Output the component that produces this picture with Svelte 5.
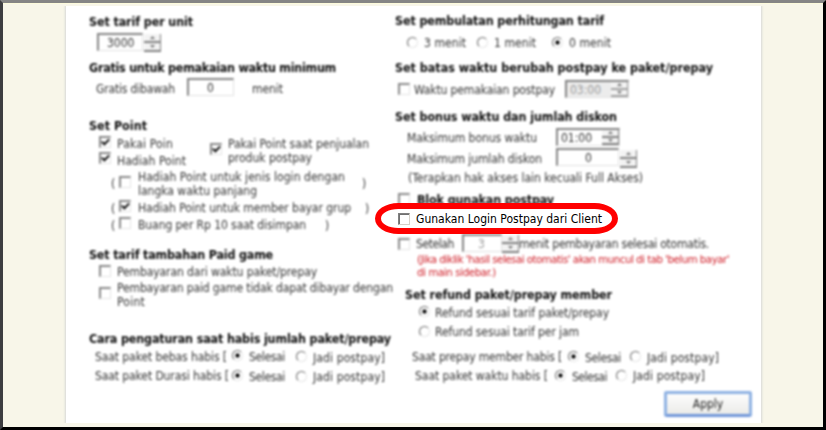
<script>
  // Item kinds: t = text, b = bold heading, r = red note, c = checkbox,
  // o = radio, i = input, s = spinner. x is the left edge, w the width.
  const t = (x, end, text, dy = 0) => ({ k: 't', x, w: end - x, text, dy: dy + 0.5 });
  const b = (x, end, text) => ({ k: 'b', x, w: end - x, text, dy: 0.5 });
  const r = (x, end, text) => ({ k: 'r', x, w: end - x, text, dy: 0.5 });
  const c = (x, on = false, dy = 0) => ({ k: 'c', x, w: 12, on, dy });
  const o = (x, on = false, dy = 0) => ({ k: 'o', x, w: 11, on, dy });
  const i = (x, w, text, pad, extra = {}) => ({ k: 'i', x, w, text, pad, dy: 0, ...extra });
  const s = (x, dy = 0) => ({ k: 's', x, w: 17, dy });

  const left = [
    [21, b(89, 193, 'Set tarif per unit')],
    [42, i(97, 46, '3000', 8), s(144, 1)],
    [67, b(89, 336, 'Gratis untuk pemakaian waktu minimum')],
    [88, t(96, 175, 'Gratis dibawah'), i(187, 47, '0', 18, { dy: -1 }), t(252, 283, 'menit')],
    [125, b(89, 147, 'Set Point')],
    [143, c(99, true, -1), t(117, 173, 'Pakai Poin'), c(210, true, 6), t(228, 369, 'Pakai Point saat penjualan')],
    [158, c(99, true, 0), t(117, 186, 'Hadiah Point', 2), t(228, 312, 'produk postpay', -1)],
    [176, t(111, 115, '(', 7), c(119, false, 6), t(138, 345, 'Hadiah Point untuk jenis login dengan'), t(362, 366, ')', 7)],
    [190, t(138, 257, 'langka waktu panjang')],
    [207, t(111, 115, '(', 1), c(119, true, -1), t(138, 351, 'Hadiah Point untuk member bayar grup'), t(365, 369, ')', 1)],
    [224, t(111, 115, '(', 1), c(119, false, -1), t(138, 306, 'Buang per Rp 10 saat disimpan'), t(325, 329, ')', 1)],
    [254, b(89, 273, 'Set tarif tambahan Paid game')],
    [271, c(99), t(117, 317, 'Pembayaran dari waktu paket/prepay')],
    [287, c(99, false, 6), t(117, 393, 'Pembayaran paid game tidak dapat dibayar dengan')],
    [301, t(117, 145, 'Point')],
    [338, b(89, 391, 'Cara pengaturan saat habis jumlah paket/prepay')],
    [357, t(95, 227, 'Saat paket bebas habis [', -1), o(232, true, -2), t(249, 285, 'Selesai', -0.5), o(296, false, -1), t(313, 385, 'Jadi postpay]')],
    [376, t(95, 229, 'Saat paket Durasi habis [', -1), o(232, true, -1), t(249, 285, 'Selesai'), o(296), t(313, 385, 'Jadi postpay]')]
  ];

  const right = [
    [20, b(395, 604, 'Set pembulatan perhitungan tarif')],
    [42, o(407), t(424, 466, '3 menit'), o(477), t(494, 536, '1 menit'), o(552, true), t(569, 611, '0 menit')],
    [67, b(395, 713, 'Set batas waktu berubah postpay ke paket/prepay')],
    [89, c(398), t(414, 555, 'Waktu pemakaian postpay'), i(565, 64, '03:00', 3, { off: true, spin: true })],
    [116, b(395, 617, 'Set bonus waktu dan jumlah diskon')],
    [137, t(407, 537, 'Maksimum bonus waktu'), i(556, 64, '01:00', 3, { spin: true })],
    [158, t(407, 542, 'Maksimum jumlah diskon'), i(556, 63, '0', 27, { dy: -1 }), s(620, 1)],
    [177, t(408, 643, '(Terapkan hak akses lain kecuali Full Akses)')],
    [199, c(398), b(417, 554, 'Blok gunakan postpay')],
    [243, c(398, false, 1), t(416, 454, 'Setelah'), i(462, 40, '3', 14, { faint: true }), s(502, 1), t(519, 709, 'menit pembayaran selesai otomatis.')],
    [259, r(417, 729, "(Jika diklik 'hasil selesai otomatis' akan muncul di tab 'belum bayar'")],
    [272, r(417, 496, 'di main sidebar.)')],
    [294, b(405, 612, 'Set refund paket/prepay member')],
    [312, o(419, true, -1), t(435, 609, 'Refund sesuai tarif paket/prepay')],
    [331, o(419), t(435, 579, 'Refund sesuai tarif per jam')],
    [357, t(412, 562, 'Saat prepay member habis [', -0.5), o(568, true, -1), t(585, 621, 'Selesai'), o(630, false, -1), t(647, 719, 'Jadi postpay]')],
    [376, t(415, 548, 'Saat paket waktu habis [', -0.5), o(555, true, -1), t(572, 607, 'Selesai'), o(616, false, -1), t(633, 705, 'Jadi postpay]', -0.5)]
  ];

  const ROW = 12;
  const PANEL_TOP = 6;

  // Turns edges and centre lines into the gaps between rows and items.
  function layout(rows, originX) {
    let bottom = PANEL_TOP;
    return rows.map(([cy, ...items]) => {
      const gap = cy - ROW / 2 - bottom;
      bottom = cy + ROW / 2;
      let x = originX;
      return {
        gap,
        items: items.map((it) => {
          const space = it.x - x;
          x = it.x + it.w;
          return { ...it, space };
        })
      };
    });
  }

  const columns = [
    { side: 'left', rows: layout(left, 66) },
    { side: 'right', rows: layout(right, 395) }
  ];

  // Tracks the letters so that a label fills its column width.
  function fit(node, width) {
    const natural = node.getBoundingClientRect().width;
    node.style.letterSpacing = (width - natural) / node.textContent.length + 'px';
  }
</script>

{#snippet tick()}
  <svg class="tick" viewBox="0 0 8 8"><path d="M.7 3.2 3 5.6 7.3 1.2" /></svg>
{/snippet}

{#snippet spinner()}
  <span class="spinner">
    <i><svg viewBox="0 0 5 3"><path d="M0 3 2.5 0 5 3z" /></svg></i>
    <i><svg viewBox="0 0 5 3"><path d="M0 0 2.5 3 5 0z" /></svg></i>
  </span>
{/snippet}

<div class="frame">
  <div class="panel">
    <div class="form">
      {#each columns as col}
        <div class="column {col.side}">
          {#each col.rows as row}
            <div class="row" style="margin-top:{row.gap}px">
              {#each row.items as it}
                <div
                  class="item"
                  style="margin-left:{it.space}px;width:{it.w}px;transform:translateY({it.dy}px)"
                >
                  {#if it.k === 't' || it.k === 'b' || it.k === 'r'}
                    <span class="text {it.k}" use:fit={it.w}>{it.text}</span>
                  {:else if it.k === 'c'}
                    <span class="check">{#if it.on}{@render tick()}{/if}</span>
                  {:else if it.k === 'o'}
                    <span class="radio" class:on={it.on}></span>
                  {:else if it.k === 'i'}
                    <span class="input" class:off={it.off} class:faint={it.faint} style="padding-left:{it.pad}px">
                      <span class="text">{it.text}</span>
                      {#if it.spin}{@render spinner()}{/if}
                    </span>
                  {:else}
                    {@render spinner()}
                  {/if}
                </div>
              {/each}
            </div>
          {/each}
          {#if col.side === 'right'}
            <button class="apply">Apply</button>
          {/if}
        </div>
      {/each}
    </div>
  </div>

  <div class="callout">
    <span class="check sharp"></span>
    <span class="text" use:fit={186}>Gunakan Login Postpay dari Client</span>
  </div>
</div>

<style>
  :global(body) {
    margin: 0;
    overflow: hidden;
  }
  .frame {
    position: relative;
    box-sizing: border-box;
    width: 826px;
    height: 430px;
    border: 3px solid #000;
    border-top-color: #858585;
    border-left-color: #3d3d40;
    background: #f8f6e9;
    padding: 3px 62px 4px 63px;
    font: 12px/14px 'DejaVu Sans Condensed', 'DejaVu Sans', sans-serif;
    font-stretch: condensed;
    color: #000;
    box-shadow: inset 0 1px #fdfbdc;
  }
  .panel {
    height: 417px;
    background: #fff;
    box-shadow: 0 0 2px 1px #d6d8d6;
    clip-path: inset(0 -3px 0 -3px);
  }
  .form {
    display: flex;
    height: 100%;
    filter: blur(0.9px);
    color: #333;
  }
  .column {
    display: flex;
    flex-direction: column;
  }
  .left {
    width: 329px;
  }
  .right {
    width: 366px;
  }
  .row {
    display: flex;
    align-items: center;
    flex: none;
    height: 12px;
  }
  .item {
    display: flex;
    align-items: center;
    flex: none;
  }
  .text {
    flex: none;
    white-space: pre;
  }
  .b {
    font-size: 12.4px;
    font-weight: bold;
    color: #0c0c0c;
  }
  .r {
    font-size: 11.3px;
    color: #cf1c26;
  }
  .check {
    box-sizing: border-box;
    width: 12px;
    height: 12px;
    flex: none;
    display: flex;
    align-items: center;
    justify-content: center;
    border: 1px solid #e4e4e4;
    border-top: 2px solid #8a8a8a;
    border-left: 2px solid #8a8a8a;
    background: #fff;
  }
  .tick {
    width: 9px;
    height: 9px;
    fill: none;
    stroke: #111;
    stroke-width: 1.8;
  }
  .radio {
    box-sizing: border-box;
    width: 11px;
    height: 11px;
    border-radius: 50%;
    border: 1.5px solid #666;
    border-right-color: #e6e6e6;
    border-bottom-color: #e6e6e6;
  }
  .radio.on {
    background: radial-gradient(circle, #000 0 1.6px, #fff 2.5px);
  }
  .input {
    box-sizing: border-box;
    width: 100%;
    height: 18px;
    flex: none;
    display: flex;
    align-items: center;
    justify-content: space-between;
    border: 1px solid #e2e2e2;
    border-top: 2px solid #858585;
    border-left: 2px solid #858585;
  }
  .off {
    background: #ececec;
    color: #999;
  }
  .faint {
    color: #999;
  }
  .spinner {
    width: 17px;
    height: 18px;
    flex: none;
    display: flex;
    flex-direction: column;
  }
  .spinner i {
    box-sizing: border-box;
    flex: 1;
    display: flex;
    align-items: center;
    justify-content: center;
    background: #f3f3f3;
    border-right: 1.5px solid #808080;
    border-bottom: 2px solid #808080;
  }
  .spinner svg {
    width: 5px;
    height: 3px;
    fill: #777;
  }
  .input .spinner {
    height: 15px;
  }
  .off .spinner i {
    border-color: #a0a0a0;
  }
  .apply {
    box-sizing: border-box;
    width: 88px;
    height: 26px;
    flex: none;
    margin: 9px 0 0 269px;
    padding: 0;
    border: 3px solid #8fb2e3;
    border-bottom-color: #7096d9;
    border-radius: 3px;
    background: linear-gradient(#fdfdfd, #ebebe8);
    font: inherit;
    line-height: 14px;
    color: #222;
  }
  .callout {
    position: absolute;
    left: 372px;
    top: 200px;
    box-sizing: border-box;
    width: 243px;
    height: 31px;
    display: flex;
    align-items: center;
    gap: 6px;
    padding-left: 17px;
    border: 6px solid #f00;
    border-radius: 24px / 16px;
    background: #fff;
  }
  .callout .text {
    padding-top: 1px;
  }
  .sharp {
    border: 1px solid #d4d0c8;
    border-top-color: #808080;
    border-left-color: #808080;
    box-shadow: inset 1px 1px #707070;
  }
</style>
